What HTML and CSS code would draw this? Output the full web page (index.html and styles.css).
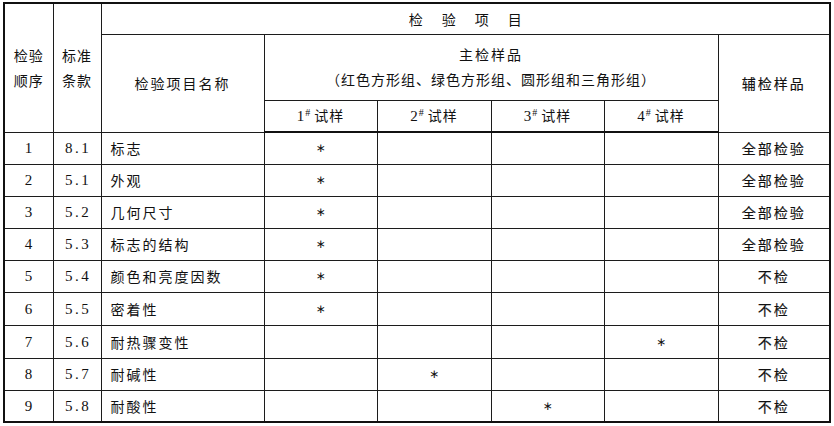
FILE: index.html
```html
<!DOCTYPE html>
<html lang="zh">
<head>
<meta charset="utf-8">
<title>检验项目</title>
<link rel="stylesheet" href="styles.css">
</head>
<body>
<div class="page">
<table class="spec">
  <colgroup>
    <col class="c-seq"><col class="c-clause"><col class="c-name">
    <col class="c-s1"><col class="c-s2"><col class="c-s3"><col class="c-s4">
    <col class="c-aux">
  </colgroup>
  <thead>
    <tr class="h1">
      <th rowspan="3" class="stack">检验<br>顺序</th>
      <th rowspan="3" class="stack">标准<br>条款</th>
      <th colspan="6" class="spaced"><span>检验项目</span></th>
    </tr>
    <tr class="h2">
      <th rowspan="2" class="name-h">检验项目名称</th>
      <th colspan="4" class="main"><span class="main-t">主检样品</span><br><span class="main-s">（红色方形组、绿色方形组、圆形组和三角形组）</span></th>
      <th rowspan="2" class="aux-h">辅检样品</th>
    </tr>
    <tr class="h3">
      <th class="sample"><span class="dg">1</span><sup>#</sup> 试样</th>
      <th class="sample"><span class="dg">2</span><sup>#</sup> 试样</th>
      <th class="sample"><span class="dg">3</span><sup>#</sup> 试样</th>
      <th class="sample"><span class="dg">4</span><sup>#</sup> 试样</th>
    </tr>
  </thead>
  <tbody>
    <tr><td class="num">1</td><td class="num">8.1</td><td class="name">标志</td><td class="mark">∗</td><td></td><td></td><td></td><td class="aux">全部检验</td></tr>
    <tr><td class="num">2</td><td class="num">5.1</td><td class="name">外观</td><td class="mark">∗</td><td></td><td></td><td></td><td class="aux">全部检验</td></tr>
    <tr><td class="num">3</td><td class="num">5.2</td><td class="name">几何尺寸</td><td class="mark">∗</td><td></td><td></td><td></td><td class="aux">全部检验</td></tr>
    <tr><td class="num">4</td><td class="num">5.3</td><td class="name">标志的结构</td><td class="mark">∗</td><td></td><td></td><td></td><td class="aux">全部检验</td></tr>
    <tr><td class="num">5</td><td class="num">5.4</td><td class="name">颜色和亮度因数</td><td class="mark">∗</td><td></td><td></td><td></td><td class="aux">不检</td></tr>
    <tr class="tall"><td class="num">6</td><td class="num">5.5</td><td class="name">密着性</td><td class="mark">∗</td><td></td><td></td><td></td><td class="aux">不检</td></tr>
    <tr class="tall"><td class="num">7</td><td class="num">5.6</td><td class="name">耐热骤变性</td><td></td><td></td><td></td><td class="mark">∗</td><td class="aux">不检</td></tr>
    <tr><td class="num">8</td><td class="num">5.7</td><td class="name">耐碱性</td><td></td><td class="mark">∗</td><td></td><td></td><td class="aux">不检</td></tr>
    <tr><td class="num">9</td><td class="num">5.8</td><td class="name">耐酸性</td><td></td><td></td><td class="mark">∗</td><td></td><td class="aux">不检</td></tr>
  </tbody>
</table>
</div>
</body>
</html>
```
FILE: styles.css
```css
html, body {
  margin: 0;
  padding: 0;
  background: #ffffff;
}

body {
  font-family: "Noto Sans CJK SC", "Noto Sans", sans-serif;
  color: #111111;
}

.page {
  padding: 2px 0 0 3px;
}

.spec {
  border-collapse: collapse;
  table-layout: fixed;
  width: 828px;
  border: 2px solid #111111;
  font-size: 14px;
}

.c-seq { width: 49px; }
.c-clause { width: 48px; }
.c-name { width: 163px; }
.c-s1 { width: 113px; }
.c-s2 { width: 114px; }
.c-s3 { width: 113px; }
.c-s4 { width: 114px; }
.c-aux { width: 112px; }

.spec th,
.spec td {
  border: 1px solid #1c1c1c;
  padding: 0;
  font-weight: normal;
  text-align: center;
  vertical-align: middle;
  letter-spacing: 2px;
  line-height: 20px;
}

.spec thead tr.h3 th {
  border-bottom: 2px solid #111111;
}

.h1 { height: 31px; }
.h2 { height: 66px; }
.h3 { height: 32px; }

.stack {
  line-height: 25px !important;
  letter-spacing: 1px !important;
}

.spaced span {
  letter-spacing: 19px;
  margin-right: -19px;
}

.main {
  line-height: 25px !important;
}

.main-s {
  letter-spacing: 1px;
}

.sample {
  letter-spacing: 1px !important;
}

.sample .dg {
  font-family: "Liberation Serif", serif;
  font-size: 15px;
}

.sample sup {
  font-family: "Liberation Serif", serif;
  font-size: 10px;
  vertical-align: 5px;
  line-height: 0;
  letter-spacing: 0;
}

.aux-h {
  -webkit-text-stroke: 0.15px #111111;
}

.spec tbody tr { height: 32px; }
.spec tbody tr.tall { height: 33px; }

.num {
  font-family: "Liberation Serif", serif;
  font-size: 15px;
  letter-spacing: 2.5px !important;
  padding-left: 2px !important;
}

.name {
  text-align: left !important;
  padding-left: 9px !important;
}

.mark {
  font-family: "DejaVu Sans", sans-serif;
  font-size: 12px;
  letter-spacing: 0 !important;
}

.aux {
  -webkit-text-stroke: 0.15px #111111;
}
```
